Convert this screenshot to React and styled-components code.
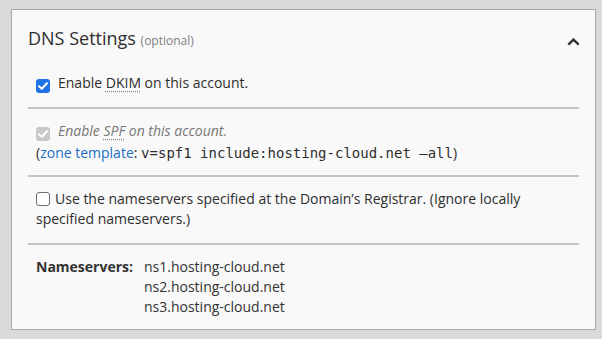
import React from 'react';
import styled, { createGlobalStyle } from 'styled-components';

const GlobalStyle = createGlobalStyle`
  html, body {
    margin: 0;
    padding: 0;
    background: #dadada;
  }
  body {
    font-family: "Open Sans", "Noto Sans", sans-serif;
    color: #333;
  }
`;

const Page = styled.div`
  padding: 9px 6px 9px 11px;
`;

const Panel = styled.section`
  background: #f9f9f9;
  border: 1px solid #a9a9a9;
`;

const Header = styled.div`
  display: flex;
  align-items: center;
  justify-content: space-between;
  padding: 16px 15px 8px 16px;
`;

const Title = styled.h2`
  margin: 0;
  font-size: 18px;
  line-height: 24px;
  font-weight: 400;
  color: #2e2e2e;
`;

const Optional = styled.span`
  font-size: 12px;
  color: #808080;
`;

const Toggle = styled.button`
  display: flex;
  border: 0;
  padding: 0;
  background: none;
  margin-top: 5px;
  cursor: pointer;
`;

const Body = styled.div`
  padding: 0 16px;
`;

const Section = styled.div`
  padding: ${(p) => p.$pad || '12px 8px 14px'};
  font-size: 14px;
  line-height: 20px;
  & + & {
    border-top: 2px solid #c3c3c3;
  }
`;

const Line = styled.div`
  margin-top: ${(p) => p.$top || 0}px;
  color: ${(p) => (p.$muted ? '#777' : '#2e2e2e')};
  font-style: ${(p) => (p.$muted ? 'italic' : 'normal')};
`;

const Box = styled.span`
  display: inline-flex;
  align-items: center;
  justify-content: center;
  box-sizing: border-box;
  width: 14px;
  height: 14px;
  vertical-align: -2px;
  margin-right: ${(p) => p.$gap}px;
  border-radius: 3px;
  background: ${(p) => (p.$disabled ? '#c9c9c9' : p.$checked ? '#1f72e6' : '#fff')};
  border: ${(p) => (p.$checked ? 'none' : '1.5px solid #6e6e78')};
`;

const Abbr = styled.abbr`
  text-decoration: underline dotted #8a8a8a;
  text-underline-offset: 3px;
`;

const Link = styled.a`
  color: #1b6fc2;
  text-decoration: none;
`;

const Code = styled.code`
  font-family: "DejaVu Sans Mono", "Liberation Mono", monospace;
  font-size: 14px;
`;

const NsGrid = styled.div`
  display: grid;
  grid-template-columns: auto 1fr;
  column-gap: 11px;
`;

const NsLabel = styled.div`
  font-weight: 700;
`;

const Checkbox = ({ checked, disabled, gap = 8 }) => (
  <Box $checked={checked} $disabled={disabled} $gap={gap}>
    {checked && (
      <svg width="10" height="8" viewBox="0 0 10 8">
        <polyline points="1,4.2 3.8,6.8 9,1.2" fill="none" stroke="#fff" strokeWidth="2" strokeLinecap="round" strokeLinejoin="round" />
      </svg>
    )}
  </Box>
);

const nameservers = ['ns1.hosting-cloud.net', 'ns2.hosting-cloud.net', 'ns3.hosting-cloud.net'];

export default function App() {
  return (
    <Page>
      <GlobalStyle />
      <Panel>
        <Header>
          <Title>
            DNS Settings <Optional>(optional)</Optional>
          </Title>
          <Toggle aria-label="Collapse">
            <svg width="13" height="8" viewBox="0 0 13 8">
              <polyline points="1.3,6.7 6.5,1.6 11.7,6.7" fill="none" stroke="#333" strokeWidth="2.4" />
            </svg>
          </Toggle>
        </Header>
        <Body>
          <Section>
            <Line>
              <Checkbox checked />
              Enable <Abbr title="DomainKeys Identified Mail">DKIM</Abbr> on this account.
            </Line>
          </Section>
          <Section $pad="12px 8px 12px">
            <Line $muted>
              <Checkbox checked disabled />
              Enable <Abbr title="Sender Policy Framework">SPF</Abbr> on this account.
            </Line>
            <Line $top={2}>
              (<Link href="#">zone template</Link>: <Code>v=spf1 include:hosting-cloud.net –all</Code>)
            </Line>
          </Section>
          <Section>
            <Line>
              <Checkbox gap={5} />
              Use the nameservers specified at the Domain’s Registrar. (Ignore locally specified nameservers.)
            </Line>
          </Section>
          <Section $pad="12px 8px 12px">
            <NsGrid>
              <NsLabel>Nameservers:</NsLabel>
              <div>
                {nameservers.map((ns) => (
                  <div key={ns}>{ns}</div>
                ))}
              </div>
            </NsGrid>
          </Section>
        </Body>
      </Panel>
    </Page>
  );
}
